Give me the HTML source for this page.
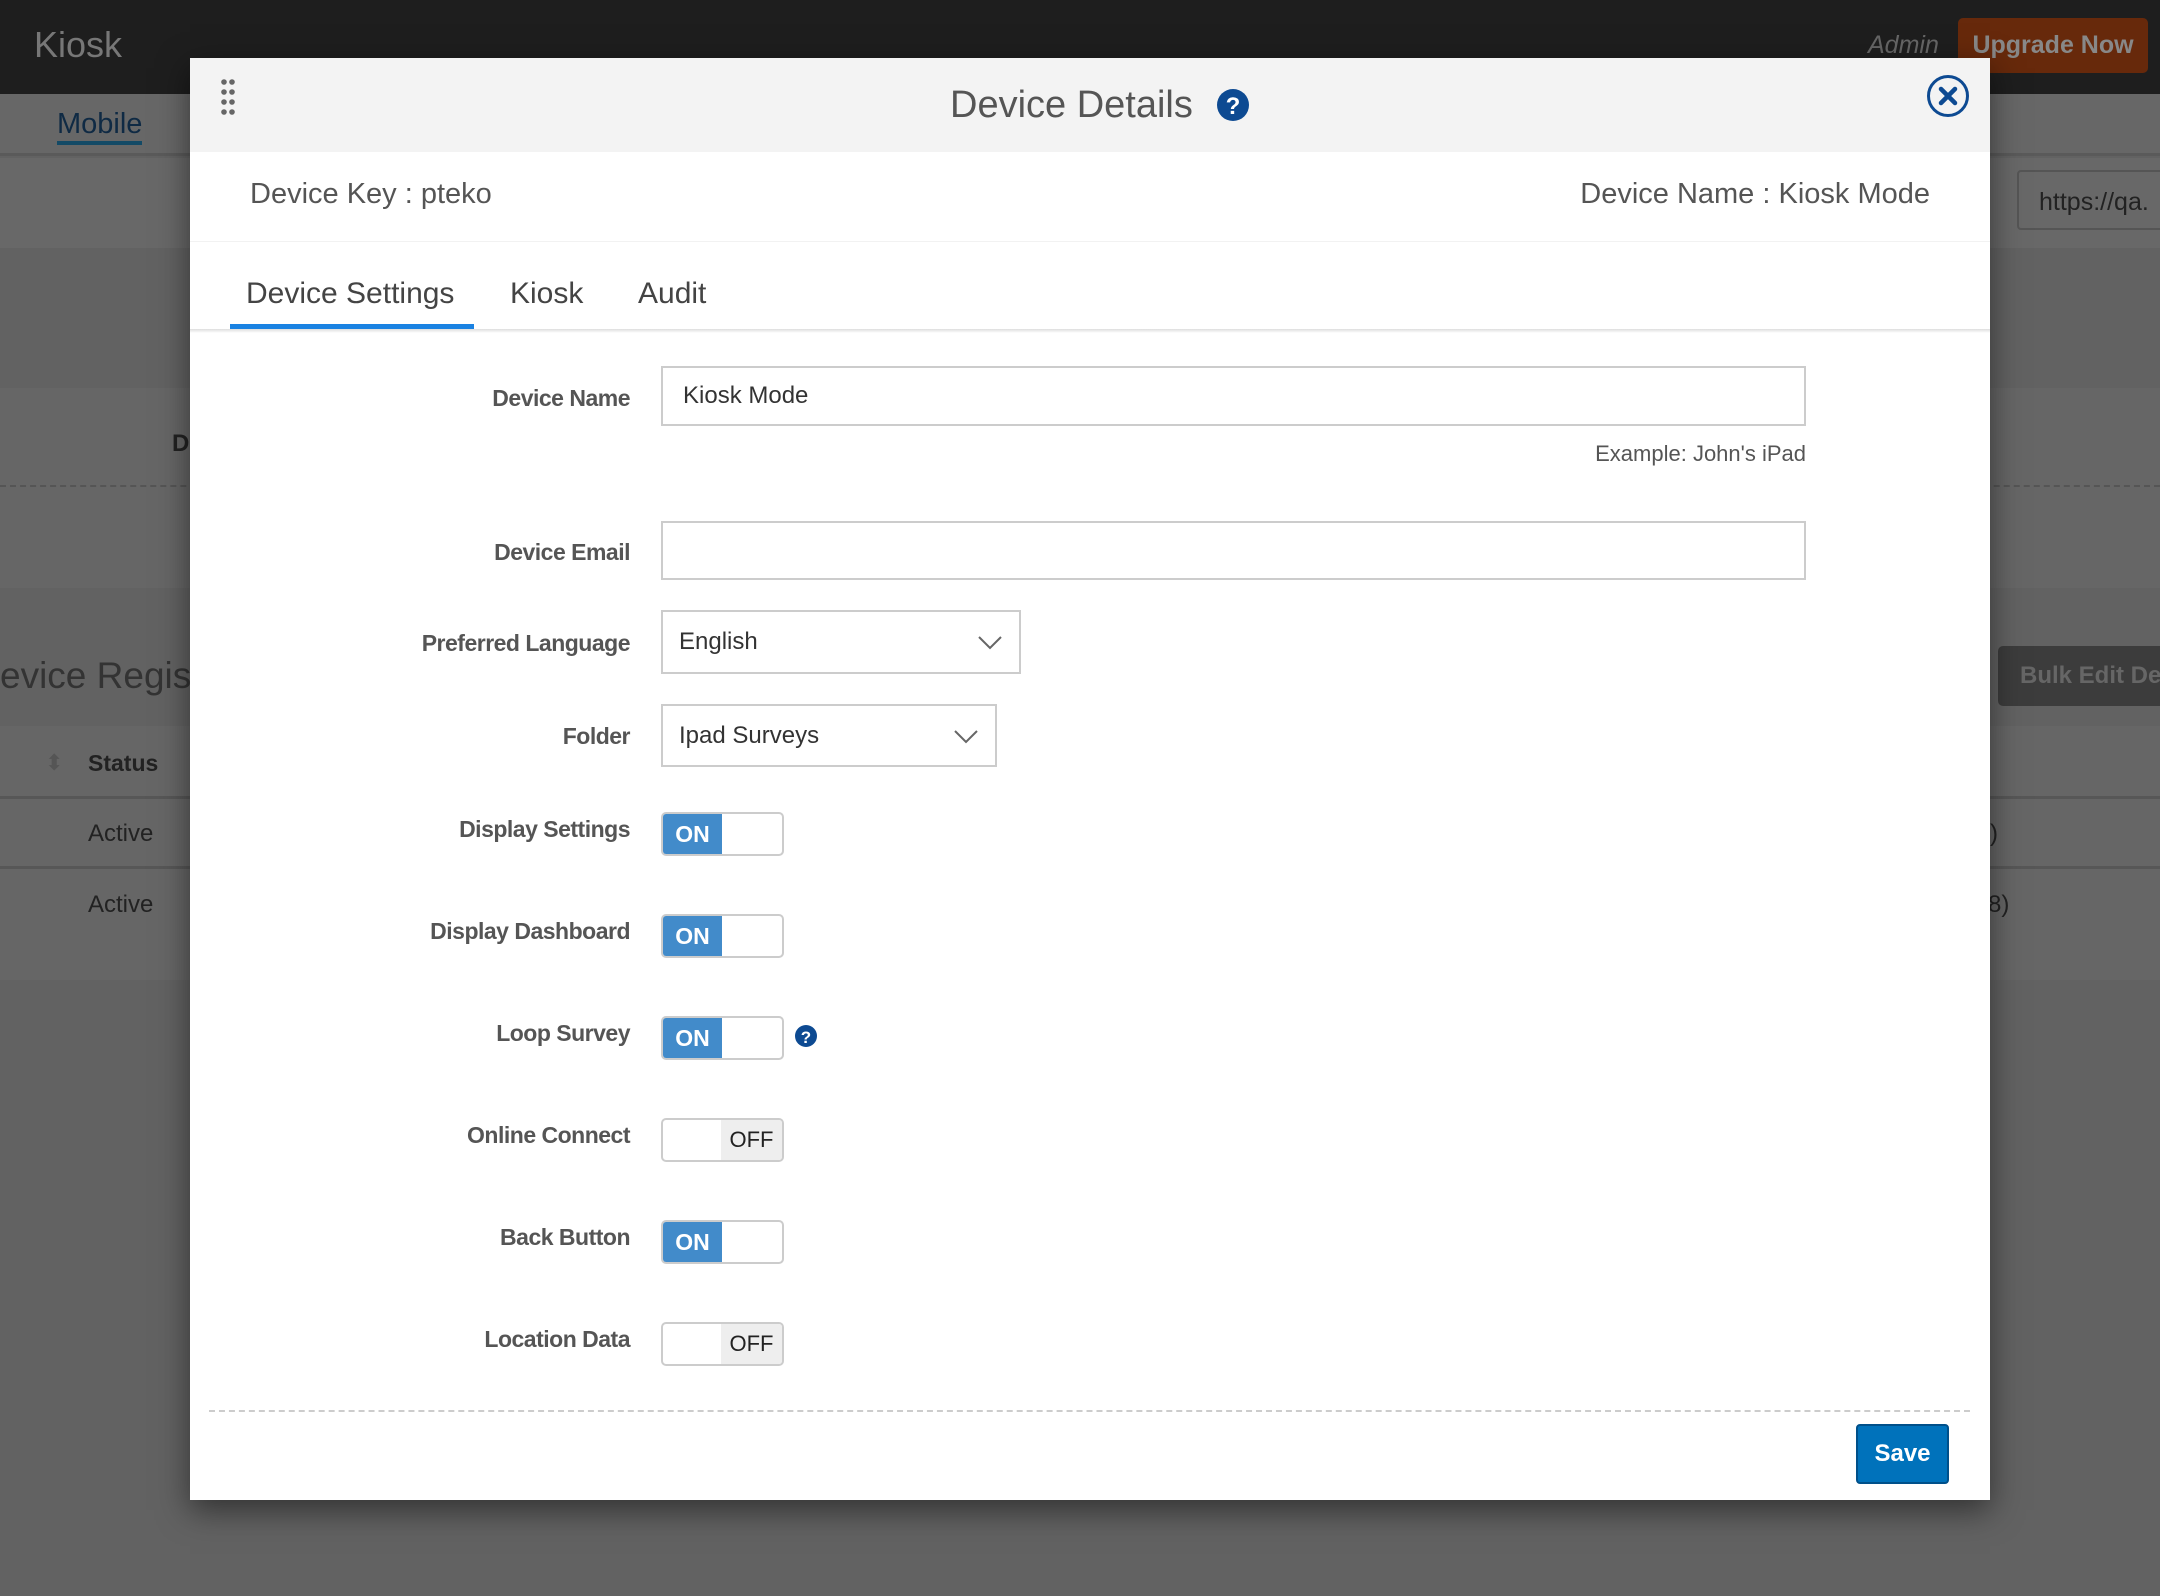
<!DOCTYPE html>
<html><head><meta charset="utf-8">
<style>
*{box-sizing:border-box;margin:0;padding:0}
body{width:2160px;height:1596px;background:#626262;position:relative;overflow:hidden;font-family:"Liberation Sans",sans-serif}
.a{position:absolute}
.lbl{position:absolute;right:1530px;font-weight:bold;font-size:23px;color:#555;letter-spacing:-0.5px;white-space:nowrap}
.inp{position:absolute;left:661px;border:2px solid #ccc;background:#fff;font-size:24px;color:#333;padding-left:20px;display:flex;align-items:center}
.tg{position:absolute;left:661px;width:123px;height:44px;border:2px solid #ccc;border-radius:5px;background:#fff;overflow:hidden}
.tg .on{position:absolute;left:0;top:0;width:59px;height:100%;background:#428bca;color:#fff;font-weight:bold;font-size:23px;display:flex;align-items:center;justify-content:center}
.tg .off{position:absolute;right:0;top:0;width:61px;height:100%;background:#eee;color:#222;font-size:22px;display:flex;align-items:center;justify-content:center}
</style></head><body>
<div class="a" style="left:0;top:0;width:2160px;height:94px;background:#1e1e1e"></div>
<div class="a" style="left:34px;top:24px;font-size:36px;color:#777">Kiosk</div>
<div class="a" style="left:1868px;top:31px;font-size:25px;color:#666;font-style:italic">Admin</div>
<div class="a" style="left:1958px;top:18px;width:190px;height:55px;background:#67290b;border-radius:5px;color:#888;font-size:25px;font-weight:bold;display:flex;align-items:center;justify-content:center">Upgrade Now</div>
<div class="a" style="left:0;top:94px;width:2160px;height:62px;background:#676767;border-bottom:3px solid #5a5a5a"></div>
<div class="a" style="left:57px;top:108px;font-size:29px;color:#0f2a44;border-bottom:4px solid #134a66">Mobile</div>
<div class="a" style="left:0;top:158px;width:2160px;height:90px;background:#686868"></div>
<div class="a" style="left:2017px;top:170px;width:160px;height:60px;border:2px solid #555;border-radius:4px;font-size:25px;color:#222;padding:16px 20px">https://qa.</div>
<div class="a" style="left:0;top:388px;width:2160px;height:200px;background:#666"></div>
<div class="a" style="left:172px;top:430px;font-size:24px;font-weight:bold;color:#222">D</div>
<div class="a" style="left:0;top:485px;width:2160px;border-top:2px dashed #555"></div>
<div class="a" style="left:0;top:655px;font-size:37px;color:#333">evice Registr</div>
<div class="a" style="left:1998px;top:646px;width:180px;height:60px;background:#3c3c3c;border-radius:5px;color:#666;font-size:24px;font-weight:bold;padding:16px 22px;white-space:nowrap">Bulk Edit Dev</div>
<div class="a" style="left:0;top:726px;width:2160px;height:254px;background:#666"></div>
<div class="a" style="left:0;top:796px;width:2160px;border-top:3px solid #575757"></div>
<div class="a" style="left:0;top:866px;width:2160px;border-top:3px solid #575757"></div>
<div class="a" style="left:45px;top:750px;color:#555;font-size:22px">⬍</div>
<div class="a" style="left:88px;top:750px;font-size:23px;font-weight:bold;color:#222">Status</div>
<div class="a" style="left:88px;top:820px;font-size:24px;color:#222">Active</div>
<div class="a" style="left:88px;top:891px;font-size:24px;color:#222">Active</div>
<div class="a" style="left:1990px;top:820px;font-size:24px;color:#222">)</div>
<div class="a" style="left:1988px;top:891px;font-size:24px;color:#222">8)</div>

<!-- modal -->
<div class="a" style="left:190px;top:58px;width:1800px;height:1442px;background:#fff;box-shadow:0 10px 30px rgba(0,0,0,.5)">
  <div class="a" style="left:0;top:0;width:1800px;height:94px;background:#f3f3f3"></div>
  <svg class="a" style="left:31px;top:20px" width="14" height="40" viewBox="0 0 14 40"><g fill="#666"><circle cx="3" cy="4" r="2.8"/><circle cx="11" cy="4" r="2.8"/><circle cx="3" cy="14" r="2.8"/><circle cx="11" cy="14" r="2.8"/><circle cx="3" cy="24" r="2.8"/><circle cx="11" cy="24" r="2.8"/><circle cx="3" cy="34" r="2.8"/><circle cx="11" cy="34" r="2.8"/></g></svg>
  <div class="a" style="left:760px;top:26px;font-size:38px;color:#555">Device Details</div>
  <svg class="a" style="left:1027px;top:31px" width="32" height="32" viewBox="0 0 32 32"><circle cx="16" cy="16" r="16" fill="#0d4a92"/><text x="16" y="25" text-anchor="middle" font-family="Liberation Sans" font-weight="bold" font-size="24" fill="#fff">?</text></svg>
  <svg class="a" style="left:1736px;top:16px" width="44" height="44" viewBox="0 0 44 44"><circle cx="22" cy="22" r="19.5" fill="none" stroke="#0d4a92" stroke-width="3"/><path d="M15 15L29 29M29 15L15 29" stroke="#0d4a92" stroke-width="4.5" stroke-linecap="round"/></svg>
  <div class="a" style="left:60px;top:120px;font-size:29px;color:#555">Device Key : pteko</div>
  <div class="a" style="right:60px;top:120px;font-size:29px;color:#555">Device Name : Kiosk Mode</div>
  <div class="a" style="left:0;top:183px;width:1800px;border-top:1px solid #f2f2f2"></div>
  <div class="a" style="left:56px;top:219px;font-size:30px;color:#444">Device Settings</div>
  <div class="a" style="left:320px;top:219px;font-size:30px;color:#444">Kiosk</div>
  <div class="a" style="left:448px;top:219px;font-size:30px;color:#444">Audit</div>
  <div class="a" style="left:40px;top:266px;width:244px;height:5px;background:#1a82e2"></div>
  <div class="a" style="left:0;top:271px;width:1800px;height:4px;background:linear-gradient(#ddd,#fff)"></div>
</div>

<div class="lbl" style="top:385px">Device Name</div>
<div class="inp" style="top:366px;width:1145px;height:60px">Kiosk Mode</div>
<div class="a" style="right:354px;top:441px;font-size:22px;color:#555">Example: John's iPad</div>
<div class="lbl" style="top:539px">Device Email</div>
<div class="inp" style="top:521px;width:1145px;height:59px"></div>
<div class="lbl" style="top:630px">Preferred Language</div>
<div class="inp" style="top:610px;width:360px;height:64px;padding-left:16px">English</div>
<svg class="a" style="left:978px;top:636px" width="24" height="14" viewBox="0 0 24 14"><path d="M1 1L12 12L23 1" fill="none" stroke="#666" stroke-width="2"/></svg>
<div class="lbl" style="top:723px">Folder</div>
<div class="inp" style="top:704px;width:336px;height:63px;padding-left:16px">Ipad Surveys</div>
<svg class="a" style="left:954px;top:730px" width="24" height="14" viewBox="0 0 24 14"><path d="M1 1L12 12L23 1" fill="none" stroke="#666" stroke-width="2"/></svg>

<div class="lbl" style="top:816px">Display Settings</div>
<div class="tg" style="top:812px"><div class="on">ON</div></div>
<div class="lbl" style="top:918px">Display Dashboard</div>
<div class="tg" style="top:914px"><div class="on">ON</div></div>
<div class="lbl" style="top:1020px">Loop Survey</div>
<div class="tg" style="top:1016px"><div class="on">ON</div></div>
<svg class="a" style="left:795px;top:1025px" width="22" height="22" viewBox="0 0 22 22"><circle cx="11" cy="11" r="11" fill="#0d4a92"/><text x="11" y="18" text-anchor="middle" font-family="Liberation Sans" font-weight="bold" font-size="17" fill="#fff">?</text></svg>
<div class="lbl" style="top:1122px">Online Connect</div>
<div class="tg" style="top:1118px"><div class="off">OFF</div></div>
<div class="lbl" style="top:1224px">Back Button</div>
<div class="tg" style="top:1220px"><div class="on">ON</div></div>
<div class="lbl" style="top:1326px">Location Data</div>
<div class="tg" style="top:1322px"><div class="off">OFF</div></div>

<div class="a" style="left:209px;top:1410px;width:1761px;border-top:2px dashed #ccc"></div>
<div class="a" style="left:1856px;top:1424px;width:93px;height:60px;background:#0072bb;border:2px solid #00508a;border-radius:4px;color:#fff;font-weight:bold;font-size:24px;display:flex;align-items:center;justify-content:center">Save</div>
</body></html>
